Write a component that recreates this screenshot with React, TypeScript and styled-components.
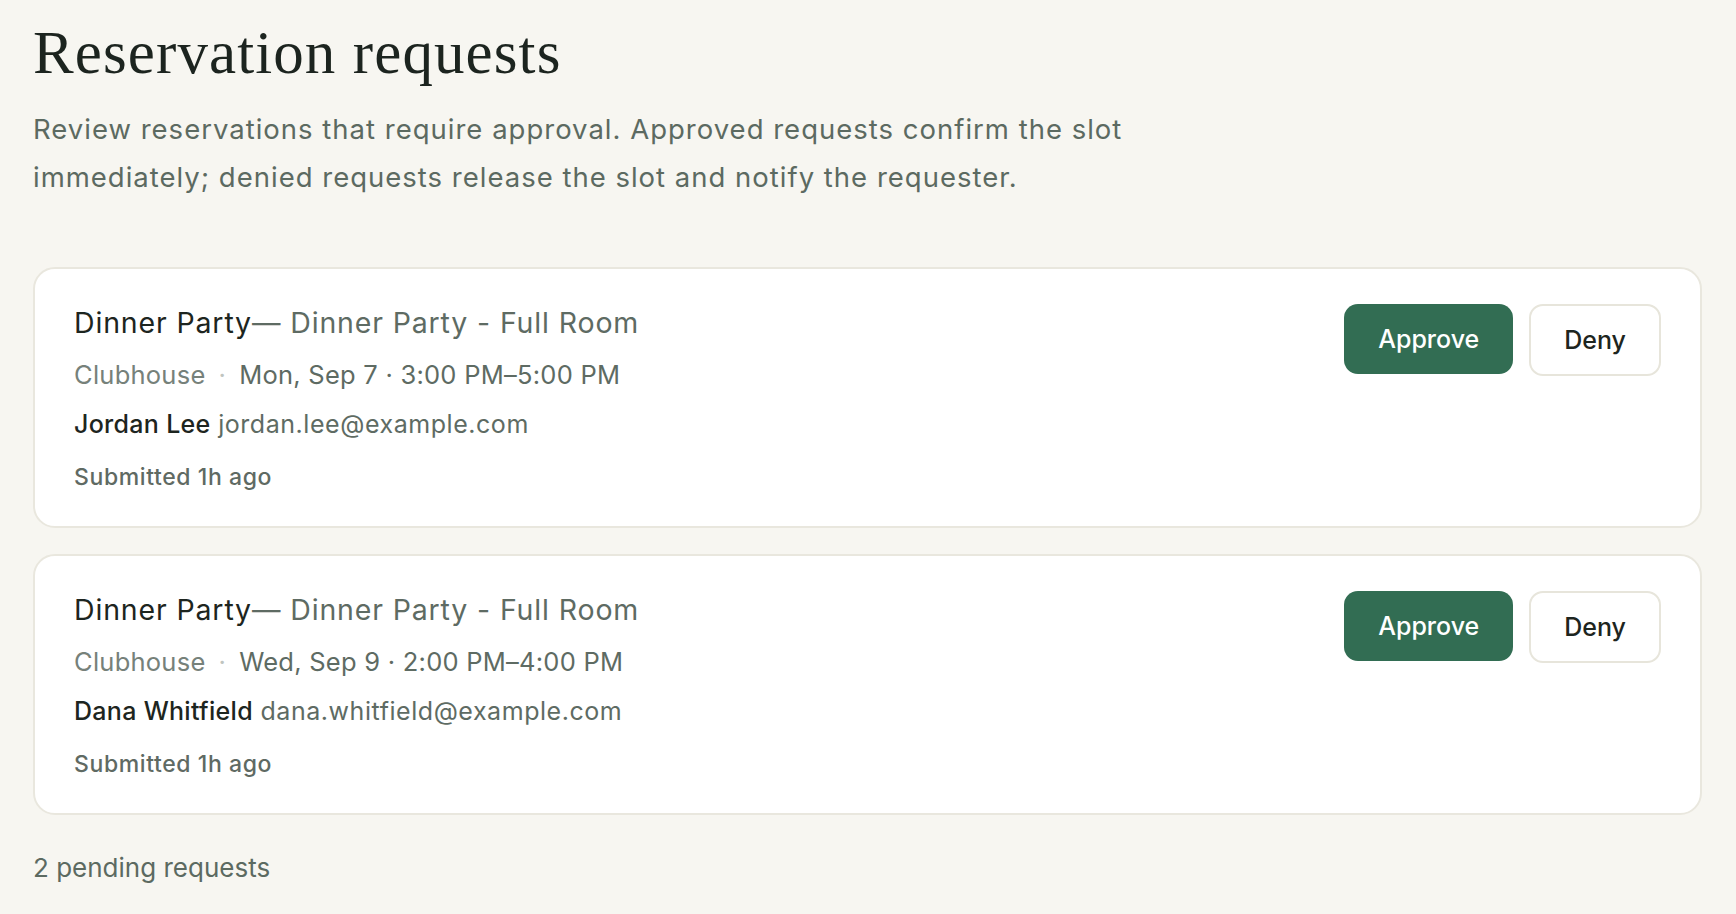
import React from 'react';
import styled, { createGlobalStyle } from 'styled-components';

const GlobalStyle = createGlobalStyle`
  html, body {
    margin: 0;
    padding: 0;
    background: #f7f6f1;
  }
  body {
    font-family: Inter, 'Noto Sans', sans-serif;
    color: #1d2520;
  }
`;

interface Request {
  id: number,
  event: string,
  room: string,
  place: string,
  when: string,
  name: string,
  email: string,
  submitted: string,
}

const requests: Request[] = [
  {
    id: 1,
    event: 'Dinner Party',
    room: 'Dinner Party - Full Room',
    place: 'Clubhouse',
    when: 'Mon, Sep 7 · 3:00 PM–5:00 PM',
    name: 'Jordan Lee',
    email: 'jordan.lee@example.com',
    submitted: 'Submitted 1h ago',
  },
  {
    id: 2,
    event: 'Dinner Party',
    room: 'Dinner Party - Full Room',
    place: 'Clubhouse',
    when: 'Wed, Sep 9 · 2:00 PM–4:00 PM',
    name: 'Dana Whitfield',
    email: 'dana.whitfield@example.com',
    submitted: 'Submitted 1h ago',
  },
];

const Page = styled.main`
  padding: 16px 34px 40px 33px;
`;

const Title = styled.h1`
  margin: 0;
  font-family: 'Liberation Serif', 'Times New Roman', serif;
  font-weight: 400;
  font-size: 61px;
  line-height: 73px;
  letter-spacing: 1.1px;
  color: #1c241f;
`;

const Intro = styled.p`
  margin: 16px 0 0;
  max-width: 1180px;
  font-size: 27.5px;
  line-height: 48px;
  letter-spacing: 1px;
  color: #5c6a61;
`;

const List = styled.section`
  margin-top: 66px;
  display: flex;
  flex-direction: column;
  gap: 26px;
`;

const Card = styled.article`
  display: flex;
  justify-content: space-between;
  align-items: flex-start;
  background: #ffffff;
  border: 2px solid #e9e7de;
  border-radius: 22px;
  padding: 35px 39px 33px 39px;
`;

const Details = styled.div`
  display: flex;
  flex-direction: column;
`;

const CardTitle = styled.div`
  font-size: 28.5px;
  line-height: 38px;
  letter-spacing: 0.85px;
  color: #5e6b63;
`;

const EventName = styled.span`
  color: #1d2520;
`;

const Meta = styled.div`
  margin-top: 15px;
  font-size: 25.5px;
  line-height: 36px;
  letter-spacing: 0.25px;
  color: #5e6b63;
`;

const Place = styled.span`
  color: #76817a;
`;

const Dot = styled.span`
  color: #c0c5bf;
  margin: 0 13px 0 13px;
`;

const Requester = styled.div`
  margin-top: 13px;
  font-size: 25px;
  line-height: 36px;
  letter-spacing: 0.55px;
  color: #5e6b63;
`;

const Name = styled.span`
  color: #1d2520;
  font-weight: 500;
  letter-spacing: 0.3px;
`;

const Submitted = styled.div`
  margin-top: 19px;
  font-size: 23px;
  line-height: 32px;
  font-weight: 500;
  letter-spacing: 0.6px;
  color: #5f6a63;
`;

const Actions = styled.div`
  display: flex;
  align-items: flex-start;
  gap: 16px;
`;

interface ButtonProps {
  $primary?: boolean
}

const Button = styled.button<ButtonProps>`
  height: ${(props) => (props.$primary ? '70px' : '72px')};
  padding: 0 ${(props) => (props.$primary ? '34px' : '33px')};
  border-radius: 14px;
  font-family: Inter, 'Noto Sans', sans-serif;
  font-size: 25px;
  font-weight: 500;
  cursor: pointer;
  border: ${(props) => (props.$primary ? 'none' : '2px solid #e7e5db')};
  background: ${(props) => (props.$primary ? '#326d53' : '#ffffff')};
  color: ${(props) => (props.$primary ? '#ffffff' : '#1d2520')};
`;

const Footer = styled.div`
  margin-top: 33px;
  font-size: 26px;
  line-height: 40px;
  color: #5c6a61;
`;

const RequestCard = ({ request }: { request: Request }) => (
  <Card>
    <Details>
      <CardTitle>
        <EventName>{request.event}</EventName>— {request.room}
      </CardTitle>
      <Meta>
        <Place>{request.place}</Place>
        <Dot>·</Dot>
        {request.when}
      </Meta>
      <Requester>
        <Name>{request.name}</Name> {request.email}
      </Requester>
      <Submitted>{request.submitted}</Submitted>
    </Details>
    <Actions>
      <Button $primary>Approve</Button>
      <Button>Deny</Button>
    </Actions>
  </Card>
);

const App = () => (
  <Page>
    <GlobalStyle />
    <Title>Reservation requests</Title>
    <Intro>
      Review reservations that require approval. Approved requests confirm the slot
      immediately; denied requests release the slot and notify the requester.
    </Intro>
    <List>
      {requests.map((r) => <RequestCard key={r.id} request={r} />)}
    </List>
    <Footer>{requests.length} pending requests</Footer>
  </Page>
);

export default App;
